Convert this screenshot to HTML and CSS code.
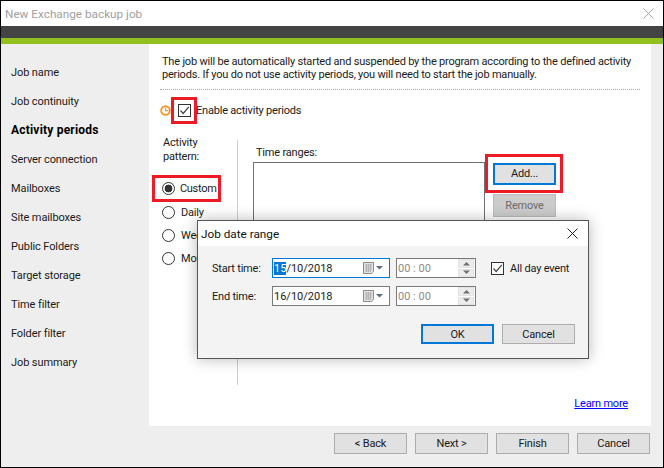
FILE: index.html
```html
<!DOCTYPE html>
<html lang="en">
<head>
<meta charset="utf-8">
<title>New Exchange backup job</title>
<link rel="stylesheet" href="styles.css">
</head>
<body>
<div class="window">
  <header class="titlebar">
    <span class="title">New Exchange backup job</span>
    <svg class="win-close" width="11" height="11" viewBox="0 0 11 11"><path d="M0.5 0.5L10.5 10.5M10.5 0.5L0.5 10.5" stroke="#a8a8a8" fill="none"/></svg>
  </header>
  <div class="band-dark"></div>
  <div class="band-green"></div>
  <div class="middle">
    <nav class="sidebar">
      <div class="nav-item">Job name</div>
      <div class="nav-item">Job continuity</div>
      <div class="nav-item active">Activity periods</div>
      <div class="nav-item">Server connection</div>
      <div class="nav-item">Mailboxes</div>
      <div class="nav-item">Site mailboxes</div>
      <div class="nav-item">Public Folders</div>
      <div class="nav-item">Target storage</div>
      <div class="nav-item">Time filter</div>
      <div class="nav-item">Folder filter</div>
      <div class="nav-item">Job summary</div>
    </nav>
    <main class="panel">
      <p class="intro">The job will be automatically started and suspended by the program according to the defined activity<br>periods. If you do not use activity periods, you will need to start the job manually.</p>
      <div class="dotted"></div>
      <div class="enable-row">
        <svg class="clock" width="11" height="11" viewBox="0 0 11 11"><circle cx="5.5" cy="5.5" r="4.3" fill="none" stroke="#f0982a" stroke-width="1.9"/><path d="M5.5 2.8V5.6H8.2" fill="none" stroke="#f0982a" stroke-width="1.2"/></svg>
        <span class="red-box check-box-wrap">
          <span class="checkbox"><svg width="11" height="11" viewBox="0 0 11 11"><path d="M1.5 5.5L4.2 8.5L9.8 1.8" fill="none" stroke="#444" stroke-width="1.2"/></svg></span>
        </span>
        <span class="enable-label">Enable activity periods</span>
      </div>
      <div class="lower">
        <div class="pattern">
          <div class="pattern-label">Activity<br>pattern:</div>
          <div class="red-box custom-box">
            <span class="radio checked"></span><span class="custom-text">Custom</span>
          </div>
          <div class="radio-row"><span class="radio"></span>Daily</div>
          <div class="radio-row"><span class="radio"></span>Weekly</div>
          <div class="radio-row"><span class="radio"></span>Monthly</div>
        </div>
        <div class="ranges">
          <div class="ranges-label">Time ranges:</div>
          <div class="ranges-body">
            <div class="listbox"></div>
            <div class="list-actions">
              <div class="red-box add-box"><button class="btn btn-focus add-btn">Add...</button></div>
              <button class="btn remove-btn">Remove</button>
            </div>
          </div>
        </div>
      </div>
      <a class="learn" href="#">Learn more</a>
    </main>
    <div class="right-strip"></div>
  </div>
  <footer class="footer">
    <button class="btn foot-btn">&lt; Back</button>
    <button class="btn foot-btn">Next &gt;</button>
    <button class="btn foot-btn">Finish</button>
    <button class="btn foot-btn">Cancel</button>
  </footer>

  <section class="dialog">
    <div class="dlg-title">
      <span>Job date range</span>
      <svg width="11" height="11" viewBox="0 0 11 11"><path d="M0.5 0.5L10.5 10.5M10.5 0.5L0.5 10.5" stroke="#222" fill="none"/></svg>
    </div>
    <div class="dlg-body">
      <div class="dlg-grid">
        <label class="dlg-label">Start time:</label>
        <div class="date-input focus"><span class="date-text"><span class="sel">15</span>/10/2018</span><svg class="cal" width="24" height="12" viewBox="0 0 24 12"><path d="M0.5 0.5H10.5V9L8.5 11.5H0.5Z" fill="#e4e4e4" stroke="#8a8a8a"/><path d="M2 3H9M2 5H9M2 7H9M2 9H8M3.5 2V10M5.5 2V10M7.5 2V10" stroke="#b4b4b4" stroke-width="1"/><path d="M13 4H20L16.5 7.5Z" fill="#5a6b85"/></svg></div>
        <div class="time-input"><span class="time-text">00 : 00</span><span class="spin"><span class="spin-part"><svg width="9" height="5" viewBox="0 0 9 5"><path d="M1 4.5L4.5 1L8 4.5Z" fill="#707070"/></svg></span><span class="spin-part"><svg width="9" height="5" viewBox="0 0 9 5"><path d="M1 .5L4.5 4L8 .5Z" fill="#707070"/></svg></span></span></div>
        <div class="allday"><span class="checkbox"><svg width="11" height="11" viewBox="0 0 11 11"><path d="M1.5 5.5L4.2 8.5L9.8 1.8" fill="none" stroke="#444" stroke-width="1.2"/></svg></span><span class="allday-text">All day event</span></div>
        <label class="dlg-label">End time:</label>
        <div class="date-input"><span class="date-text">16/10/2018</span><svg class="cal" width="24" height="12" viewBox="0 0 24 12"><path d="M0.5 0.5H10.5V9L8.5 11.5H0.5Z" fill="#e4e4e4" stroke="#8a8a8a"/><path d="M2 3H9M2 5H9M2 7H9M2 9H8M3.5 2V10M5.5 2V10M7.5 2V10" stroke="#b4b4b4" stroke-width="1"/><path d="M13 4H20L16.5 7.5Z" fill="#5a6b85"/></svg></div>
        <div class="time-input"><span class="time-text">00 : 00</span><span class="spin"><span class="spin-part"><svg width="9" height="5" viewBox="0 0 9 5"><path d="M1 4.5L4.5 1L8 4.5Z" fill="#707070"/></svg></span><span class="spin-part"><svg width="9" height="5" viewBox="0 0 9 5"><path d="M1 .5L4.5 4L8 .5Z" fill="#707070"/></svg></span></span></div>
      </div>
      <div class="dlg-actions">
        <button class="btn btn-focus dlg-btn">OK</button>
        <button class="btn dlg-btn">Cancel</button>
      </div>
    </div>
  </section>
</div>
</body>
</html>
```
FILE: styles.css
```css
* { box-sizing: border-box; }
html, body { margin: 0; padding: 0; }
body {
  width: 664px;
  height: 468px;
  overflow: hidden;
  font-family: Roboto, "Open Sans", sans-serif;
  font-size: 11px;
  letter-spacing: -0.2px;
  line-height: 14px;
  color: #1a1a1a;
  background: #fff;
}
.window {
  position: relative;
  width: 664px;
  height: 468px;
  border: 1px solid #000;
  display: flex;
  flex-direction: column;
  background: #eeeeee;
}
.titlebar {
  height: 25px;
  flex: none;
  background: #fff;
  display: flex;
  align-items: center;
  justify-content: space-between;
  padding: 0 9px 0 4px;
}
.title { font-size: 11.75px; letter-spacing: 0; color: #a0a0a0; }
.band-dark { height: 12px; flex: none; background: #444444; }
.band-green { height: 6px; flex: none; background: #92c01f; }
.middle { display: flex; height: 382px; flex: none; }
.sidebar {
  width: 148px;
  flex: none;
  padding: 14px 0 0 10px;
  background: #eeeeee;
}
.nav-item { height: 29px; line-height: 29px; white-space: nowrap; letter-spacing: -0.1px; }
.nav-item.active { font-size: 12px; letter-spacing: 0.2px; font-weight: 700; color: #000; }
.panel {
  width: 502px;
  flex: none;
  background: #fff;
  display: flex;
  flex-direction: column;
  padding: 11px 0 0 11px;
}
.intro { margin: 0; line-height: 13px; white-space: nowrap; padding-left: 2px; }
.dotted { width: 480px; margin-top: 8px; border-top: 1px dotted #a8a8a8; }
.enable-row { display: flex; align-items: center; height: 27px; margin-top: 7px; }
.clock { flex: none; }
.red-box { border: 3px solid #ed1c24; }
.check-box-wrap {
  width: 26px;
  height: 27px;
  display: flex;
  align-items: center;
  justify-content: center;
}
.checkbox {
  width: 13px;
  height: 13px;
  flex: none;
  border: 1px solid #333;
  background: #fff;
  display: inline-flex;
  align-items: center;
  justify-content: center;
}
.enable-label { margin-left: -1px; padding-top: 1px; }
.lower { display: flex; margin-top: 16px; height: 245px; }
.pattern { width: 86px; margin-left: -8px; flex: none; border-right: 1px solid #c8d0d8; }
.pattern-label { padding-left: 11px; line-height: 14px; margin-top: -4px; }
.custom-box {
  width: 69px;
  height: 27px;
  margin-top: 11px;
  display: flex;
  align-items: center;
  padding-left: 7px;
}
.custom-text { margin-left: 4px; letter-spacing: -0.3px; }
.radio {
  width: 13px;
  height: 13px;
  flex: none;
  border: 1px solid #333;
  border-radius: 50%;
  background: #fff;
  display: inline-block;
  margin-right: 1px;
}
.radio.checked { background: radial-gradient(circle, #333 0 3.6px, #fff 4.2px); }
.radio-row { display: flex; align-items: center; gap: 5px; height: 23px; padding-left: 10px; white-space: nowrap; }
.custom-box + .radio-row { margin-top: -1px; }
.ranges { flex: 1; padding: 6px 0 0 15px; }
.ranges-label { padding-left: 3px; }
.ranges-body { display: flex; align-items: flex-start; margin-top: 2px; }
.listbox { width: 232px; height: 178px; border: 1px solid #707070; background: #fff; flex: none; }
.list-actions { margin-top: -8px; display: flex; flex-direction: column; align-items: flex-start; }
.add-box { width: 78px; height: 39px; padding: 6px 0 0 5px; }
.btn {
  font: inherit;
  letter-spacing: inherit;
  color: #1a1a1a;
  background: #e1e1e1;
  border: 1px solid #adadad;
  padding: 0;
  display: flex;
  align-items: center;
  justify-content: center;
}
.btn-focus { border: 2px solid #0078d7; }
.add-btn { width: 63px; height: 22px; }
.remove-btn { width: 63px; height: 23px; margin: 1px 0 0 8px; background: #cccccc; border-color: #bcbcbc; color: #6d6d6d; }
.learn { align-self: flex-end; margin: 12px 23px 0 0; color: #0000ff; line-height: 14px; text-decoration: underline; }
.right-strip { width: 12px; flex: none; background: #eeeeee; }
.footer {
  flex: 1;
  display: flex;
  justify-content: flex-end;
  gap: 8px;
  padding: 7px 13px 0 0;
}
.foot-btn { width: 73px; height: 21px; padding-top: 1px; }
.dialog {
  position: absolute;
  left: 196px;
  top: 219px;
  width: 392px;
  height: 139px;
  border: 1px solid #555;
  box-shadow: 0 0 14px rgba(0, 0, 0, 0.28);
  display: flex;
  flex-direction: column;
  background: #f3f3f3;
}
.dlg-title {
  height: 25px;
  flex: none;
  background: #fff;
  display: flex;
  align-items: center;
  justify-content: space-between;
  padding: 0 10px 0 3px;
  font-size: 11.75px;
  letter-spacing: 0;
  color: #111;
}
.dlg-body { flex: 1; padding: 12px 0 0 14px; }
.dlg-grid {
  display: grid;
  grid-template-columns: 60px 118px 80px auto;
  grid-auto-rows: 20px;
  row-gap: 8px;
  align-items: center;
}
.dlg-label { padding-top: 1px; }
.date-input, .time-input {
  height: 20px;
  background: #fff;
  border: 1px solid #7a7a7a;
  display: flex;
  align-items: center;
  justify-content: space-between;
}
.date-input { padding-left: 1px; padding-right: 2px; }
.date-input.focus { border-color: #0078d7; }
.date-text, .time-text { letter-spacing: 0; padding-top: 1px; }
.time-input { margin-left: 6px; padding-left: 1px; padding-right: 1px; width: 80px; }
.sel { background: #0078d7; color: #fff; }
.time-text { color: #8f8a88; }
.spin { width: 16px; height: 18px; display: flex; flex-direction: column; gap: 1px; }
.spin-part { flex: 1; background: #ececec; border: 1px solid #e2e2e2; display: flex; align-items: center; justify-content: center; }
.allday { display: flex; align-items: center; gap: 6px; margin-left: 21px; white-space: nowrap; }
.allday-text { padding-top: 1px; }
.dlg-actions { display: flex; gap: 8px; margin: 18px 0 0 209px; }
.dlg-btn { width: 73px; height: 20px; padding-top: 1px; }
```
